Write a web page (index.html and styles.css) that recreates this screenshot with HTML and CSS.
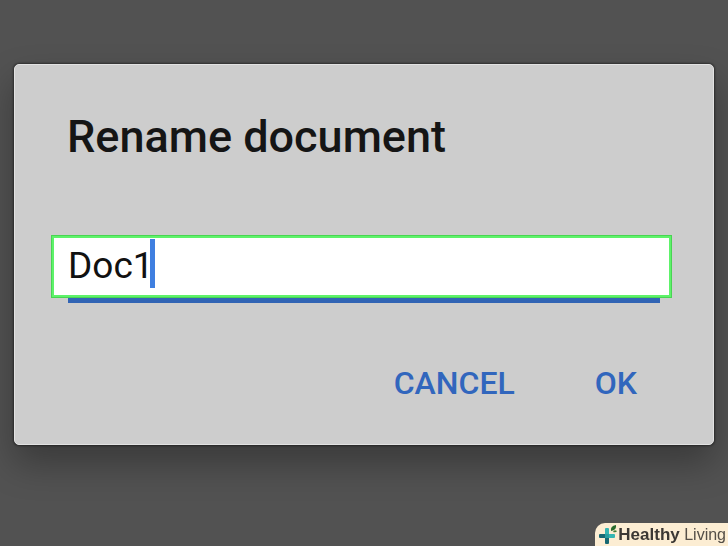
FILE: index.html
```html
<!DOCTYPE html>
<html lang="en">
<head>
    <meta charset="UTF-8">
    <meta name="viewport" content="width=device-width, initial-scale=1.0">
    <title>Rename document</title>
    <link rel="stylesheet" href="styles.css">
</head>
<body>
    <form class="dialog" role="dialog" aria-labelledby="dialogTitle">
        <label class="dialog-title" id="dialogTitle" for="docName">Rename document</label>

        <div class="field">
            <input class="field-input" id="docName" type="text" value="Doc1" autocomplete="off" spellcheck="false">
            <span class="field-caret"></span>
            <div class="field-line"></div>
        </div>

        <div class="dialog-actions">
            <button class="dialog-btn" type="button">CANCEL</button>
            <button class="dialog-btn" type="button">OK</button>
        </div>
    </form>

    <div class="brand">
        <svg class="brand-logo" viewBox="0 0 20 22" aria-hidden="true">
            <path d="M7 5q0-1 1-1h2q1 0 1 1v5h5q1 0 1 1v2q0 1-1 1h-5l-4-4z" fill="#35b5b2"/>
            <path d="M7 10H2q-1 0-1 1v2q0 1 1 1h5v5q0 1 1 1h2q1 0 1-1v-5z" fill="#176873"/>
            <path d="M7 10h4v4H7z" fill="#269da0"/>
            <path d="M13 7q-1-5 5-6 1 5-5 6z" fill="#286b2c"/>
            <path d="M15 8q1-3 4-1-1 2-4 1z" fill="#3f7d35"/>
        </svg>
        <span class="brand-name"><b>Healthy</b> Living</span>
    </div>
</body>
</html>
```
FILE: styles.css
```css
* {
    margin: 0;
    padding: 0;
    box-sizing: border-box;
}

body {
    font-family: Roboto, "Liberation Sans", sans-serif;
    background: #525252;
    min-height: 100vh;
    padding: 64px 14px 0;
    overflow: hidden;
}

.dialog {
    display: flex;
    flex-direction: column;
    background: #cdcdcd;
    border: 1px solid #e2e2e2;
    border-radius: 5px;
    padding: 42px 41px 31px 36px;
    box-shadow: 0 0 2px 1px rgba(0, 0, 0, 0.4), 0 18px 36px rgba(0, 0, 0, 0.3);
}

.dialog-title {
    font-size: 45px;
    line-height: 60px;
    font-weight: 500;
    color: #151515;
    padding-left: 16px;
}

.field {
    position: relative;
    margin-top: 68px;
}

.field-input {
    display: block;
    width: 100%;
    height: 63px;
    background: #fff;
    border: 3px solid #5ef26a;
    outline: 1px solid #48d552;
    outline-offset: -1px;
    padding: 0 14px 3px;
    font-family: inherit;
    font-size: 37px;
    color: #111;
}

/* text cursor after the name */
.field-caret {
    position: absolute;
    left: 99px;
    top: 4px;
    width: 5px;
    height: 49px;
    background: #3f7fe0;
}

.field-line {
    height: 5px;
    margin: 0 12px 0 17px;
    background: #3164b4;
}

.dialog-actions {
    display: flex;
    justify-content: flex-end;
    gap: 48px;
    margin-top: 50px;
    padding-right: 19px;
}

.dialog-btn {
    background: none;
    border: none;
    padding: 0 16px;
    font-family: inherit;
    font-size: 32px;
    line-height: 60px;
    font-weight: 500;
    color: #3166bd;
    cursor: pointer;
}

.brand {
    position: fixed;
    right: 0;
    bottom: 0;
    display: flex;
    align-items: center;
    height: 23px;
    padding: 0 2px 0 3px;
    background: #fcedd3;
    border-radius: 10px 0 0 0;
}

.brand-logo {
    width: 20px;
    height: 22px;
}

.brand-name {
    font-family: "Liberation Sans", Arial, sans-serif;
    font-size: 16px;
    line-height: 22px;
    color: #554f48;
    white-space: nowrap;
}

.brand-name b {
    font-size: 17px;
    color: #3b3733;
}
```
